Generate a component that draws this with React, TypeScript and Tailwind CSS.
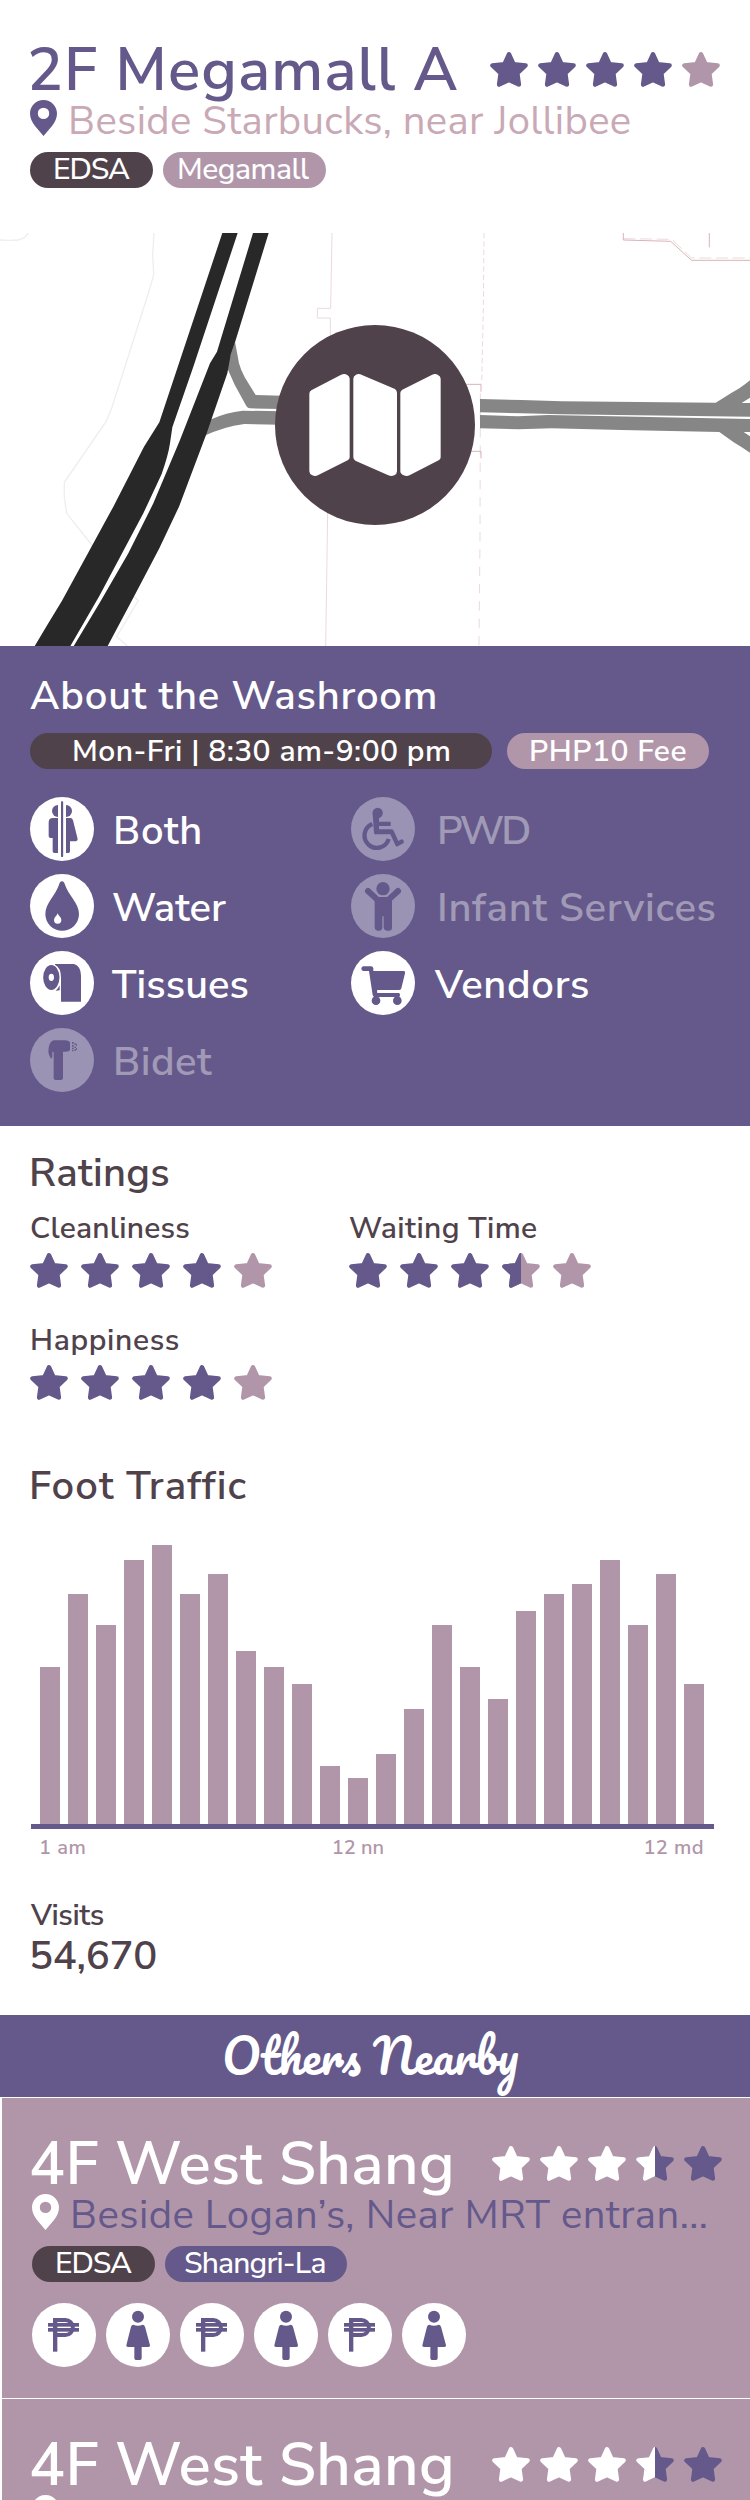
import type { ReactNode } from "react";

const STAR =
  "M19 3.2 L23.6 13.2 L35.6 14.4 L27.4 22.2 L28.9 33.6 L19 28.9 L9.1 33.6 L10.6 22.2 L2.4 14.4 L14.4 13.2 Z";

function Star({ fill, on, off }: { fill: number; on: string; off: string }) {
  return (
    <svg width="38" height="36" viewBox="0 0 38 36" className="shrink-0">
      <path
        d={STAR}
        strokeWidth="4.4"
        strokeLinejoin="round"
        className={fill === 1 ? on : off}
      />
      {fill === 0.5 && (
        <svg width="19" height="36" viewBox="0 0 19 36">
          <path d={STAR} strokeWidth="4.4" strokeLinejoin="round" className={on} />
        </svg>
      )}
    </svg>
  );
}

const PURPLE = "fill-[#64598a] stroke-[#64598a]";
const MAUVE = "fill-[#b196aa] stroke-[#b196aa]";
const WHITE = "fill-white stroke-white";

function Stars({
  value,
  on = PURPLE,
  off = MAUVE,
  className,
}: {
  value: number;
  on?: string;
  off?: string;
  className: string;
}) {
  return (
    <div className={`flex ${className}`}>
      {[0, 1, 2, 3, 4].map((i) => (
        <Star key={i} on={on} off={off} fill={value >= i + 1 ? 1 : value > i ? 0.5 : 0} />
      ))}
    </div>
  );
}

function Pin({ className }: { className: string }) {
  return (
    <svg width="27" height="36" viewBox="0 0 27 36" className={`-mt-px shrink-0 ${className}`}>
      <path
        fillRule="evenodd"
        d="M13.5 0C6 0 0 6 0 13.4C0 18 2 22 5 26L13.5 36L22 26C25 22 27 18 27 13.4C27 6 21 0 13.5 0ZM13.5 7.7A5.7 5.7 0 1 1 13.5 19.1A5.7 5.7 0 1 1 13.5 7.7Z"
      />
    </svg>
  );
}

function Pill({ className, children }: { className: string; children: ReactNode }) {
  return (
    <span className={`block h-9 rounded-full whitespace-nowrap text-[30px] text-white ${className}`}>
      {children}
    </span>
  );
}

function Badge({ children, dim = false }: { children: ReactNode; dim?: boolean }) {
  return (
    <svg width="64" height="64" viewBox="0 0 192 192" className="shrink-0 fill-[#64598a]">
      <circle cx="96" cy="96" r="96" className={dim ? "fill-[#9a93b4]" : "fill-white"} />
      {children}
    </svg>
  );
}

const icons: Record<string, ReactNode> = {
  both: (
    <>
      <rect x="93" y="13" width="6.5" height="167" rx="2" />
      <path d="M84 24A18 18 0 0 0 84 60Z" />
      <path d="M84 63H69Q56 63 56 76V117Q56 122 61 123H68V163Q68 168 73 168H84Z" />
      <path d="M108 24A18 18 0 0 1 108 60Z" />
      <path d="M108 63H121Q127 63 129 70L143 126Q143 132 138 133H120V163Q120 168 115 168H108Z" />
    </>
  ),
  water: (
    <>
      <path d="M96 22C101 22 103 26 105 32C115 64 147 86 147 120A50.5 50.5 0 0 1 46 120C46 86 77 64 87 32C89 26 91 22 96 22Z" />
      <path
        className="fill-white"
        d="M83 118C85 125 94 130 94 138A10.7 10.7 0 0 1 72 138C72 130 81 125 83 118Z"
      />
    </>
  ),
  tissues: (
    <>
      <path
        fillRule="evenodd"
        d="M64 42A24.5 37.5 0 1 1 64 117A24.5 37.5 0 1 1 64 42ZM64 68A8 11 0 1 0 64 90A8 11 0 1 0 64 68Z"
      />
      <path d="M75 39H132Q153 46 153 74V152H93V80Q93 50 75 41Z" />
      <path d="M77 119Q85 112 89 103V118Z" />
    </>
  ),
  bidet: (
    <>
      <path d="M55 72Q55 42 71 37H108Q117 38 120 43V66Q117 71 108 71H99V151Q98 156 93 156H76Q71 155 71 151V73L67 71V84Q67 90 63 92Q56 82 55 72Z" />
      <path d="M126 42h5v5h-5zM126 51h5v5h-5zM126 59h5v5h-5zM126 66h4v4h-4zM133 46h5v4h-5zM133 56h5v4h-5zM133 64h5v4h-5z" />
      <path d="M138 49h3v5h-3zM138 60h3v5h-3z" />
    </>
  ),
  pwd: (
    <>
      <circle cx="80" cy="48" r="15.5" />
      <path d="M65 50L69 108Q70 113 76 112H118L134 146Q136 150 140 148L157 139Q160 134 157 129Q153 125 149 128L142 132L128 101Q126 97 121 97H84V87H119V74H84V55Z" />
      <path
        d="M64 81A37 37 0 1 0 113 126"
        className="fill-none stroke-[#64598a]"
        strokeWidth="13"
      />
    </>
  ),
  infant: (
    <>
      <circle cx="96" cy="44" r="20" />
      <path
        d="M51 51L79 77M141 51L113 77"
        className="stroke-[#64598a]"
        strokeWidth="18"
        strokeLinecap="round"
      />
      <path d="M71 69H123V162Q122 170 114 170H107Q99 169 98 162V127H94V162Q93 170 86 170H79Q72 169 71 162Z" />
    </>
  ),
  vendors: (
    <>
      <path d="M37 46H60Q66 46 67 52V60H160Q163 62 162 67L151 112Q150 117 145 117H79V126H144Q147 127 147 132Q147 138 143 138H70Q66 137 65 132L54 60H37Q31 58 31 53Q31 47 37 46Z" />
      <circle cx="75" cy="149" r="13" />
      <circle cx="139" cy="149" r="13" />
      <rect x="79" y="118" width="68" height="7" className="fill-white" />
    </>
  ),
  peso: (
    <>
      <rect x="63" y="45" width="13" height="101" />
      <path
        d="M70 51H100A21.5 21.5 0 0 1 100 96H70"
        className="fill-none stroke-[#64598a]"
        strokeWidth="12"
      />
      <rect x="48" y="60" width="93" height="11" />
      <rect x="48" y="75" width="93" height="11" />
    </>
  ),
  woman: (
    <>
      <circle cx="96" cy="41" r="18" />
      <path d="M82 65Q96 71 110 65Q115 65 117 71L132 127Q133 132 127 132H107V166Q107 171 102 171H90Q85 171 85 166V132H66Q60 132 61 127L75 71Q77 65 82 65Z" />
    </>
  ),
};

function Feature({
  icon,
  dim = false,
  className,
  children,
}: {
  icon: string;
  dim?: boolean;
  className: string;
  children: ReactNode;
}) {
  return (
    <div className="flex h-16 items-start">
      <Badge dim={dim}>{icons[icon]}</Badge>
      <span
        className={`text-[40px] leading-[68px] font-semibold whitespace-nowrap ${
          dim ? "text-[#a19ab6]" : "text-white"
        } ${className}`}
      >
        {children}
      </span>
    </div>
  );
}

function MapView() {
  return (
    <svg viewBox="0 233 750 413" className="block h-[413px] w-full shrink-0">
      <g transform="translate(0 230) scale(0.33333)">
        <g fill="none" stroke="#eeeeee" strokeWidth="4">
          <path d="M462 9L458 75L461 135L445 190L335 535L318 575L193 757V800L200 850L278 948" />
          <path d="M0 30L25 31L55 30L73 23L85 9" />
          <path d="M403 1100L415 1112L350 1220L382 1248" />
        </g>
        <g fill="none" stroke="#ecd9dc" strokeWidth="3">
          <path d="M996 9L992 235H952V264H991V320" />
          <path d="M983 840L980 1060L977 1248" />
          <path d="M1452 9L1450 240L1445 460" strokeDasharray="16 9" />
          <path d="M1441 490L1440 930L1437 1248" strokeDasharray="28 24" />
          <path d="M1870 26L2015 28L2075 84H2250" strokeDasharray="36 14" />
        </g>
        <g fill="none" stroke="#d9b3b7" strokeWidth="3">
          <path d="M1395 463H1443V485M1410 664H1443V685" />
          <path d="M1870 9V30L2012 34L2075 91H2250M2128 9V52" />
        </g>
        <g fill="#868686">
          <path d="M705 335L717 400Q722 420 735 443L767 495L845 497V537L750 535Q743 535 739 528L704 464L680 410Z" />
          <path d="M630 569Q680 547 728 542L840 544V584L733 582Q670 590 610 619Z" />
          <path d="M1440 507L1565 510L1685 514L2147 518L2195 488Q2220 476 2250 451V503L2225 519H2250V560L1685 553L1565 550L1440 547Z" />
          <path d="M1440 555L1555 559L1645 555L2250 567V606H2231L2250 619V668L2230 655L2200 636L2158 606L1865 600L1655 595L1555 598L1440 595Z" />
        </g>
        <g fill="#282828">
          <path d="M667 9L478 577L432 650L340 830L186 1112L140 1188L103 1250H210L298 1098L430 850L485 732Q505 675 510 640L517 592L580 410L713 9Z" />
          <path d="M759 9L651 365L630 400L540 630L460 820L385 970L300 1117L220 1250H322L400 1103L478 955L537 830L620 610L682 430L692 375L706 334L806 9Z" />
        </g>
        <circle cx="1125" cy="585" r="300" fill="#50424b" />
        <g fill="#ffffff">
          <path d="M928 491Q928 485 934 481L1022 435Q1032 430 1041 434Q1049 438 1049 446V682Q1049 688 1043 691L955 735Q946 740 937 736Q928 732 928 724Z" />
          <path d="M1060 446Q1060 438 1068 434Q1076 430 1086 435L1185 477Q1191 481 1191 489V724Q1191 732 1183 736Q1174 740 1165 736L1066 692Q1060 688 1060 682Z" />
          <path d="M1201 489Q1201 483 1207 479L1295 435Q1305 430 1313 434Q1322 438 1322 446V682Q1322 688 1316 691L1230 735Q1220 740 1211 736Q1201 732 1201 724Z" />
        </g>
      </g>
    </svg>
  );
}

const traffic = [
  157, 230, 199, 264, 279, 230, 250, 173, 157, 140, 58, 46, 70, 115, 199, 157, 125, 213, 230, 240,
  264, 199, 250, 140,
];

function NearbyCard() {
  return (
    <article className="h-[301px] shrink-0 border-t border-l-2 border-white bg-[#b196aa] pt-9 pl-[30px]">
      <div className="flex items-start justify-between pr-[28px]">
        <h3 className="-ml-[3px] text-[60px] leading-[60px] font-semibold tracking-[0.4px] whitespace-nowrap text-white">
          4F West Shang
        </h3>
        <Stars value={3.5} on={WHITE} off={PURPLE} className="mt-[11px] gap-2.5" />
      </div>
      <div className="mt-px flex h-10">
        <Pin className="fill-white" />
        <p className="ml-[11px] text-[40px] leading-10 tracking-[0.45px] whitespace-nowrap text-[#64598a]">
          Beside Logan’s, Near MRT entran...
        </p>
      </div>
      <div className="mt-[11px] flex gap-2.5">
        <Pill className="w-[123px] bg-[#50424b] pl-[23px] leading-9 font-medium tracking-[-1.15px]">
          EDSA
        </Pill>
        <Pill className="w-[182px] bg-[#64598a] pl-[19px] leading-9 font-medium tracking-[-0.83px]">
          Shangri-La
        </Pill>
      </div>
      <div className="mt-[21px] flex gap-2.5">
        {["peso", "woman", "peso", "woman", "peso", "woman"].map((name, i) => (
          <Badge key={i}>{icons[name]}</Badge>
        ))}
      </div>
    </article>
  );
}

export default function App() {
  return (
    <main className="flex h-[2500px] w-[750px] flex-col overflow-hidden bg-white font-['Nunito_Sans',Lato,sans-serif] text-[#50424b]">
      <header className="h-[233px] shrink-0 pt-10 pl-[30px]">
        <div className="flex items-start justify-between pr-[30px]">
          <h1 className="-ml-[3px] text-[60px] leading-[60px] font-semibold tracking-[1.06px] whitespace-nowrap text-[#64598a]">
            2F Megamall A
          </h1>
          <Stars value={4} className="mt-[11px] gap-2.5" />
        </div>
        <div className="mt-px flex h-10">
          <Pin className="fill-[#64598a]" />
          <p className="ml-[11px] text-[40px] leading-10 tracking-[0.37px] whitespace-nowrap text-[#c8a9b5]">
            Beside Starbucks, near Jollibee
          </p>
        </div>
        <div className="mt-[11px] flex gap-2.5">
          <Pill className="w-[123px] bg-[#50424b] pl-[23px] leading-9 font-medium tracking-[-1.15px]">
            EDSA
          </Pill>
          <Pill className="w-[163px] bg-[#b196aa] pl-[14px] leading-9 font-medium tracking-[-0.46px]">
            Megamall
          </Pill>
        </div>
      </header>

      <MapView />

      <section className="h-[480px] shrink-0 bg-[#64598a] pt-[30px] pl-[30px] text-white">
        <h2 className="text-[40px] leading-10 font-semibold tracking-[0.82px]">
          About the Washroom
        </h2>
        <div className="mt-[17px] flex gap-[15px]">
          <Pill className="w-[462px] bg-[#50424b] pl-[42px] leading-[38px] font-semibold tracking-[0.44px]">
            Mon-Fri | 8:30 am-9:00 pm
          </Pill>
          <Pill className="w-[202px] bg-[#b196aa] pl-[22px] leading-[38px] font-semibold tracking-[0.48px]">
            PHP10 Fee
          </Pill>
        </div>
        <div className="mt-7 grid grid-cols-[321px_1fr]">
          <div className="flex flex-col gap-[13px]">
            <Feature icon="both" className="ml-[19px] tracking-[0.67px]">
              Both
            </Feature>
            <Feature icon="water" className="ml-[18px] tracking-[-0.07px]">
              Water
            </Feature>
            <Feature icon="tissues" className="ml-[18px] tracking-[0.08px]">
              Tissues
            </Feature>
            <Feature icon="bidet" dim className="ml-[19px] tracking-[0.48px]">
              Bidet
            </Feature>
          </div>
          <div className="flex flex-col gap-[13px]">
            <Feature icon="pwd" dim className="ml-[22px] tracking-[-2.83px]">
              PWD
            </Feature>
            <Feature icon="infant" dim className="ml-[22px] tracking-[0.7px]">
              Infant Services
            </Feature>
            <Feature icon="vendors" className="ml-[20px] tracking-[0.66px]">
              Vendors
            </Feature>
          </div>
        </div>
      </section>

      <section className="h-[889px] shrink-0 pt-[27px] pl-[30px] font-semibold">
        <h2 className="-ml-px text-[40px] leading-10 tracking-[0.29px]">Ratings</h2>
        <div className="mt-[21px] grid grid-cols-[319px_1fr] gap-y-[38px]">
          <div>
            <h3 className="text-[30px] leading-[30px] tracking-[0.21px]">Cleanliness</h3>
            <Stars value={4} className="mt-2 gap-[13px]" />
          </div>
          <div>
            <h3 className="text-[30px] leading-[30px] tracking-[0.4px]">Waiting Time</h3>
            <Stars value={3.5} className="mt-2 gap-[13px]" />
          </div>
          <div>
            <h3 className="text-[30px] leading-[30px] tracking-[0.63px]">Happiness</h3>
            <Stars value={4} className="mt-2 gap-[13px]" />
          </div>
        </div>
        <h2 className="-ml-px mt-[66px] text-[40px] leading-10 tracking-[1.16px]">Foot Traffic</h2>
        <div className="mt-[39px] ml-px flex h-[284px] w-[683px] items-end gap-2 border-b-[5px] border-[#64598a] pl-[9px]">
          {traffic.map((h, i) => (
            <div key={i} className="w-5 shrink-0 bg-[#b196aa]" style={{ height: h }} />
          ))}
        </div>
        <div className="mt-[9px] ml-[9px] flex w-[665px] justify-between text-[20px] leading-5 text-[#b196aa]">
          <span className="tracking-[0.5px]">1 am</span>
          <span className="pr-[14px]">12 nn</span>
          <span className="tracking-[0.43px]">12 md</span>
        </div>
        <h3 className="mt-[43px] ml-px text-[30px] leading-[30px] tracking-[-0.47px]">Visits</h3>
        <p className="-ml-px mt-[5px] text-[40px] leading-10 tracking-[-0.24px]">54,670</p>
      </section>

      <h2 className="h-[82px] shrink-0 bg-[#64598a] pl-[222px] font-['Pacifico',cursive] text-[46.6px] leading-[80px] whitespace-nowrap text-white">
        Others Nearby
      </h2>
      <NearbyCard />
      <NearbyCard />
    </main>
  );
}
